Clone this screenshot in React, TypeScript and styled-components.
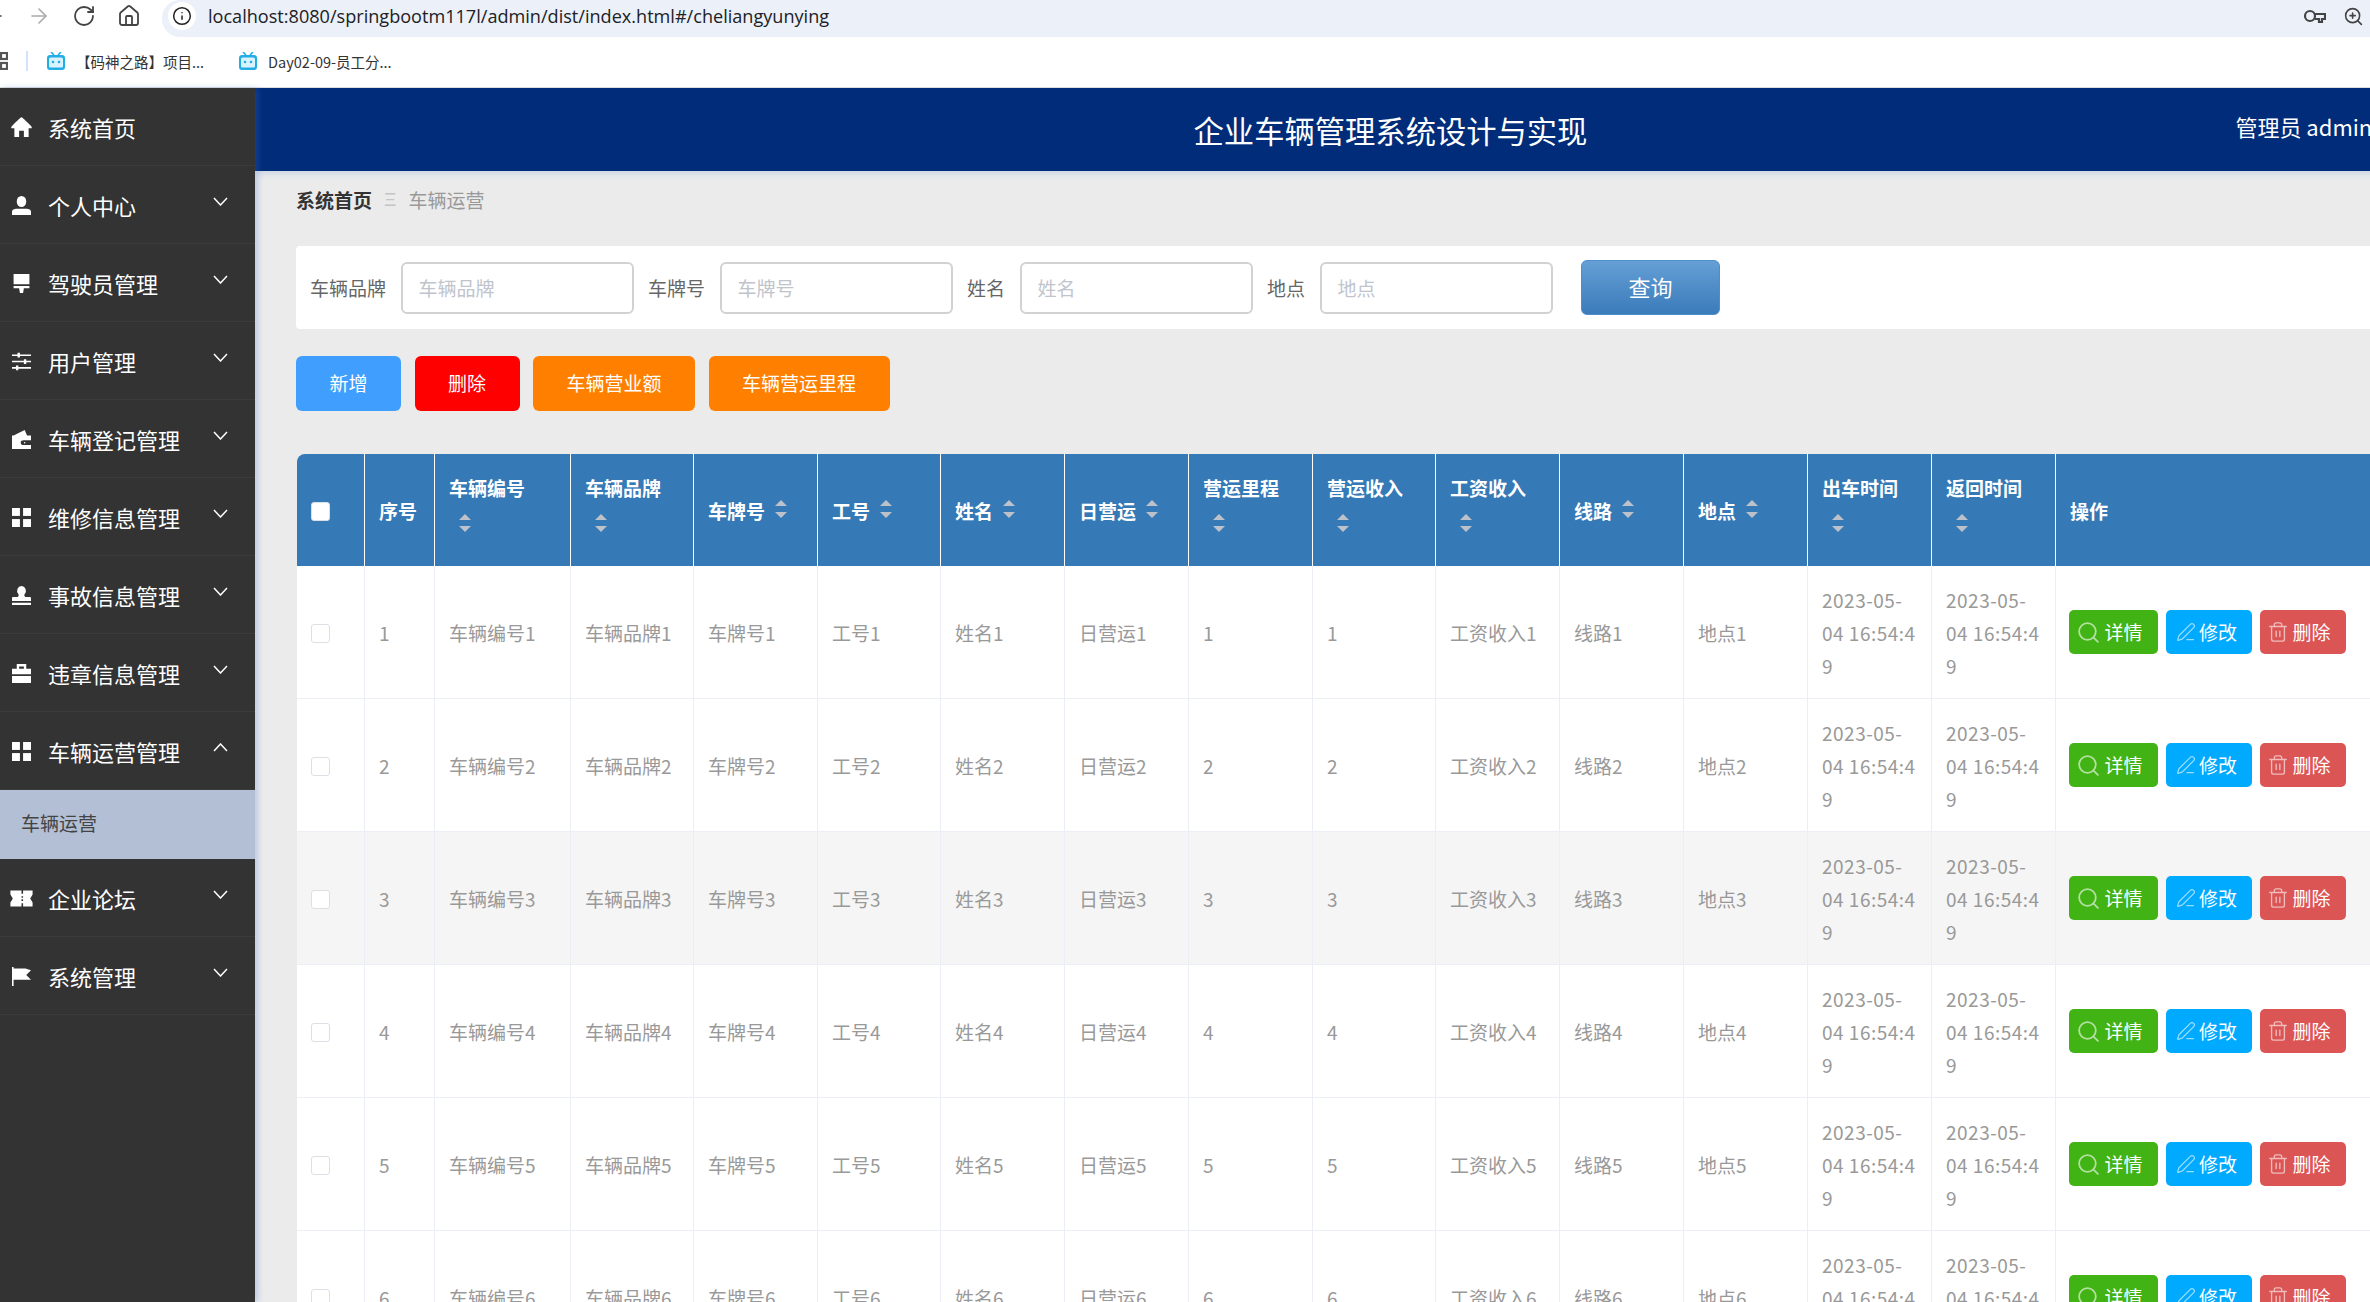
import React from 'react'
import styled, { createGlobalStyle } from 'styled-components'
import { ArrowLeft, ArrowRight, RotateCw, House, Info, ZoomIn, Search, PenLine, Trash2 } from 'lucide-react'

const FONT = `"Noto Sans CJK SC", "Liberation Sans", sans-serif`

const GlobalStyle = createGlobalStyle`
  html, body {
    margin: 0;
    padding: 0;
    overflow: hidden;
    background: #fff;
    font-family: ${FONT};
  }
`

const Page = styled.div`
  width: 2370px;
  height: 1302px;
  overflow: hidden;
  display: flex;
  flex-direction: column;
`

/* browser chrome */
const Toolbar = styled.div`
  height: 37px;
  box-sizing: border-box;
  padding-bottom: 5px;
  display: flex;
  align-items: center;
  gap: 21px;
  margin-left: -18px;
  flex-shrink: 0;
  color: #444;
`

const UrlPill = styled.div`
  flex: 1;
  height: 37px;
  margin-bottom: -5px;
  box-sizing: border-box;
  padding: 0 6px 5px;
  background: #ebf0f9;
  border-radius: 18px 0 0 18px;
  display: flex;
  align-items: center;
`

const InfoDot = styled.div`
  width: 28px;
  height: 28px;
  border-radius: 50%;
  background: #fff;
  display: flex;
  align-items: center;
  justify-content: center;
  color: #222;
`

const UrlText = styled.span`
  margin-left: 12px;
  flex: 1;
  font-family: "Open Sans", "Liberation Sans", sans-serif;
  font-size: 18.1px;
  color: #202124;
`

const PillIcons = styled.div`
  display: flex;
  align-items: center;
  gap: 17px;
  color: #444;
`

const Bookmarks = styled.div`
  height: 51px;
  box-sizing: border-box;
  padding-bottom: 2px;
  display: flex;
  align-items: center;
  flex-shrink: 0;
  border-bottom: 1px solid #dcdcdc;
  color: #333;
  font-size: 14.5px;
`

const AppsIcon = styled.svg`
  margin-left: -10px;
  width: 18px;
  height: 18px;
  color: #555;
`

const BarDivider = styled.div`
  width: 2px;
  height: 20px;
  margin-left: 18px;
  background: #d3e3fd;
`

const Bookmark = styled.div<{ $ml: number }>`
  display: flex;
  align-items: center;
  gap: 10px;
  margin-left: ${p => p.$ml}px;
`

/* sidebar */
const Body = styled.div`
  flex: 1;
  min-height: 0;
  display: flex;
`

const Sidebar = styled.aside`
  width: 255px;
  flex-shrink: 0;
  background: #333;
  position: relative;
  z-index: 2;
  box-shadow: 3px 0 6px rgba(70, 120, 210, 0.28);
`

const MenuItem = styled.div`
  height: 78px;
  box-sizing: border-box;
  border-bottom: 1px solid #3b3b3b;
  display: flex;
  align-items: center;
  padding: 0 27px 0 12px;
  color: #fff;
`

const MenuIcon = styled.svg`
  width: 19px;
  height: 19px;
  margin-top: 2px;
  flex-shrink: 0;
  fill: currentColor;
  overflow: visible;
`

const MenuLabel = styled.span`
  margin-left: 17px;
  font-size: 22px;
  line-height: 30px;
  margin-top: 1px;
  flex: 1;
`

const Chevron = styled.svg`
  width: 15px;
  height: 9px;
  margin-top: -6px;
  fill: none;
  stroke: #fff;
  stroke-width: 1.5;
`

const SubItem = styled.div`
  height: 69px;
  box-sizing: border-box;
  padding: 0 0 5px 21px;
  background: #b3bfd4;
  color: #444;
  font-size: 19px;
  display: flex;
  align-items: center;
`

/* header and content */
const Main = styled.main`
  flex: 1;
  min-width: 0;
  overflow: hidden;
  background: #ebebeb;
`

const Header = styled.header`
  width: 2271px;
  height: 83px;
  background: #002c7a;
  color: #fff;
  display: grid;
  grid-template-columns: 1fr auto 1fr;
  align-items: center;
  box-shadow: 0 3px 6px rgba(70, 120, 210, 0.18);
  position: relative;
`

const Title = styled.h1`
  grid-column: 2;
  margin: 0;
  font-size: 30.3px;
  font-weight: 400;
`

const AdminName = styled.div`
  padding: 0 0 7px 648px;
  font-size: 22px;
  white-space: nowrap;
`

const Content = styled.div`
  padding-left: 41px;
`

const Breadcrumb = styled.div`
  height: 33px;
  padding: 12px 0 30px;
  display: flex;
  align-items: center;
  font-size: 19px;
  color: #999;
`

const CrumbHome = styled.span`
  color: #333;
  font-weight: 700;
`

const CrumbSep = styled.span`
  margin: 0 12px;
  color: #c4c4c4;
  font-family: "Liberation Sans", sans-serif;
  font-size: 19px;
`

const SearchPanel = styled.div`
  height: 83px;
  background: #fff;
  border-radius: 4px 0 0 4px;
  display: flex;
  align-items: center;
  padding-left: 14px;
  gap: 14.5px;
  color: #666;
  font-size: 19px;
`

const SearchInput = styled.input`
  width: 233px;
  height: 52px;
  box-sizing: border-box;
  padding: 0 16px;
  border: 2px solid #d2d2d2;
  border-radius: 6px;
  outline: none;
  font-family: ${FONT};
  font-size: 19px;
  color: #666;
  background: #fff;
  &::placeholder {
    color: #c0c4cc;
  }
`

const QueryButton = styled.button`
  width: 139px;
  height: 55px;
  margin-left: 14px;
  padding-bottom: 4px;
  border: 1px solid #4f8fc9;
  border-radius: 6px;
  background: linear-gradient(180deg, #659fd5 0%, #3a7bba 100%);
  color: #fff;
  font-family: ${FONT};
  font-size: 22px;
`

const ActionRow = styled.div`
  display: flex;
  gap: 13.5px;
  margin: 27px 0 43px;
`

const ActionButton = styled.button<{ $bg: string }>`
  height: 55px;
  padding: 0 33.5px 3px;
  border: 0;
  border-radius: 6px;
  background: ${p => p.$bg};
  color: #fff;
  font-family: ${FONT};
  font-size: 19px;
`

/* table */
const Table = styled.table`
  margin-left: 1px;
  border-collapse: separate;
  border-spacing: 0;
  table-layout: fixed;
  width: 2142px;
  font-size: 19px;
`

const HeadRow = styled.tr`
  background: #3579b6;
  color: #fff;
`

const Th = styled.th`
  height: 112px;
  box-sizing: border-box;
  padding: 0 0 0 14px;
  border-right: 1px solid #fff;
  text-align: left;
  font-weight: 700;
  vertical-align: middle;
  &:first-child {
    border-top-left-radius: 8px;
  }
`

const HeadInner = styled.div<{ $stack?: boolean }>`
  display: flex;
  flex-direction: ${p => (p.$stack ? 'column' : 'row')};
  align-items: ${p => (p.$stack ? 'flex-start' : 'center')};
  line-height: 33px;
`

const Caret = styled.span<{ $stack?: boolean }>`
  display: flex;
  flex-direction: column;
  justify-content: center;
  gap: 6px;
  height: 34px;
  margin: ${p => (p.$stack ? '2px 0 9px 10px' : '-3px 0 0 10px')};
`

const CaretUp = styled.i`
  width: 0;
  height: 0;
  border-left: 6px solid transparent;
  border-right: 6px solid transparent;
  border-bottom: 6.5px solid #bcc1ca;
`

const CaretDown = styled(CaretUp)`
  border-bottom: 0;
  border-top: 6.5px solid #bcc1ca;
`

const Row = styled.tr<{ $hover?: boolean }>`
  background: ${p => (p.$hover ? '#f5f5f5' : '#fff')};
  color: #999;
`

const Td = styled.td`
  height: 133px;
  box-sizing: border-box;
  padding: 0 0 0 14px;
  border-right: 1px solid #ebeef5;
  border-bottom: 1.5px solid #ebeef5;
  line-height: 33px;
  vertical-align: middle;
  overflow: hidden;
`

const Check = styled.span`
  display: block;
  width: 19px;
  height: 19px;
  margin-top: 3px;
  box-sizing: border-box;
  border: 1px solid #dcdfe6;
  border-radius: 3px;
  background: #fff;
`

const DateLine = styled.div`
  white-space: nowrap;
  letter-spacing: 0.5px;
`

const RowActions = styled.div`
  display: flex;
  gap: 8px;
  margin-left: -1px;
`

const RowButton = styled.button<{ $bg: string; $pl: number }>`
  height: 44px;
  display: flex;
  align-items: center;
  gap: 3.5px;
  padding: 0 15px 2px ${p => p.$pl}px;
  border: 0;
  border-radius: 5px;
  background: ${p => p.$bg};
  color: #fff;
  font-family: ${FONT};
  font-size: 19px;
  svg {
    opacity: 0.6;
    flex-shrink: 0;
    margin-top: 2px;
  }
`

const grid = (
  <>
    <rect x="0" y="0" width="10" height="10" />
    <rect x="14" y="0" width="10" height="10" />
    <rect x="0" y="14" width="10" height="10" />
    <rect x="14" y="14" width="10" height="10" />
  </>
)

const menu: { label: string; icon: React.ReactNode; open?: boolean }[] = [
  { label: '系统首页', icon: <path d="M12 -1C10 0 8 2 0 10c-1 1-1 2-1 3h4v11h6v-8h6v8h6V13h4c0-1 0-2-1-3C16 2 14 0 12 -1z" /> },
  {
    label: '个人中心',
    icon: (
      <>
        <ellipse cx="12" cy="7" rx="6" ry="7" />
        <path d="M0 24v-4c0-3 3-4 6-4h12c3 0 6 1 6 4v4z" />
      </>
    ),
  },
  { label: '驾驶员管理', icon: <path d="M2 0h20v13H2zM2 15h20v3h-7l-1 6h-4l-1-6H2z" /> },
  {
    label: '用户管理',
    icon: <path d="M0 3h7V1h3v2h14v2H10v2H7V5H0zM0 11h15V9h3v2h6v2h-6v2h-3v-2H0zM0 19h5v-2h3v2h16v2H8v2H5v-2H0z" />,
  },
  {
    label: '车辆登记管理',
    icon: (
      <path
        fillRule="evenodd"
        d="M2 7l14-7 3 7h3v0h2v17H0V7zM15 13a4 3 0 1 0 0 6h9v-6zM16 15a1 1 0 1 1 0 2 1 1 0 0 1 0-2z"
      />
    ),
  },
  { label: '维修信息管理', icon: grid },
  {
    label: '事故信息管理',
    icon: <path d="M12 0a6 6 0 0 1 4 10c-1 2 0 3 1 4h6c1 0 1 1 1 2v3H0v-3c0-1 0-2 1-2h6c1-1 2-2 1-4a6 6 0 0 1 4-10zM0 21h24v3H0z" />,
  },
  {
    label: '违章信息管理',
    icon: (
      <path
        fillRule="evenodd"
        d="M6 6V0h12v6h6v7H0V6zM9 3v3h6V3zM0 15h24v9H0z"
      />
    ),
  },
  { label: '车辆运营管理', icon: grid, open: true },
  {
    label: '企业论坛',
    icon: <path d="M-2 2h14v4h2V2h12v5l-3 5 3 5v5H14v-4h-2v4H-2v-5l3-5-3-5zM12 9v2h2V9zM12 13v2h2v-2z" />,
  },
  {
    label: '系统管理',
    icon: <path d="M0 0h2v2h15l7 2-6 6 6 6H2v8H0z" />,
  },
]

const columns: { title: string; width: number; sort?: boolean; stack?: boolean; cell?: string }[] = [
  { title: '序号', width: 70 },
  { title: '车辆编号', width: 136, sort: true, stack: true, cell: '车辆编号' },
  { title: '车辆品牌', width: 123, sort: true, stack: true, cell: '车辆品牌' },
  { title: '车牌号', width: 124, sort: true, cell: '车牌号' },
  { title: '工号', width: 123, sort: true, cell: '工号' },
  { title: '姓名', width: 124, sort: true, cell: '姓名' },
  { title: '日营运', width: 124, sort: true, cell: '日营运' },
  { title: '营运里程', width: 124, sort: true, stack: true, cell: '' },
  { title: '营运收入', width: 123, sort: true, stack: true, cell: '' },
  { title: '工资收入', width: 124, sort: true, stack: true, cell: '工资收入' },
  { title: '线路', width: 124, sort: true, cell: '线路' },
  { title: '地点', width: 124, sort: true, cell: '地点' },
  { title: '出车时间', width: 124, sort: true, stack: true },
  { title: '返回时间', width: 124, sort: true, stack: true },
]

const rows = [1, 2, 3, 4, 5, 6]

const DateCell = () => (
  <Td>
    <DateLine>2023-05-</DateLine>
    <DateLine>04 16:54:4</DateLine>
    <DateLine>9</DateLine>
  </Td>
)

export default function App() {
  return (
    <Page>
      <GlobalStyle />
      <Toolbar>
        <ArrowLeft size={24} strokeWidth={1.6} />
        <ArrowRight size={24} strokeWidth={1.6} color="#aaa" />
        <RotateCw size={24} strokeWidth={1.8} />
        <House size={24} strokeWidth={1.8} />
        <UrlPill>
          <InfoDot>
            <Info size={20} strokeWidth={1.8} />
          </InfoDot>
          <UrlText>localhost:8080/springbootm117l/admin/dist/index.html#/cheliangyunying</UrlText>
          <PillIcons>
            <svg width="23" height="16" viewBox="0 0 23 16" fill="none" stroke="currentColor" strokeWidth="2.2">
              <circle cx="7" cy="8" r="5" />
              <path d="M12 6h10v5h-3v3h-3v-3h-4" />
            </svg>
            <ZoomIn size={21} strokeWidth={1.8} />
          </PillIcons>
        </UrlPill>
      </Toolbar>
      <Bookmarks>
        <AppsIcon viewBox="0 0 18 18" fill="none" stroke="currentColor" strokeWidth="2.2">
          <rect x="1" y="1" width="6" height="6" />
          <rect x="11" y="1" width="6" height="6" />
          <rect x="1" y="11" width="6" height="6" />
          <rect x="11" y="11" width="6" height="6" />
        </AppsIcon>
        <BarDivider />
        <Bookmark $ml={18}>
          <TvIcon />
          【码神之路】项目...
        </Bookmark>
        <Bookmark $ml={34}>
          <TvIcon />
          Day02-09-员工分...
        </Bookmark>
      </Bookmarks>
      <Body>
        <Sidebar>
          {menu.map(item => (
            <React.Fragment key={item.label}>
              <MenuItem>
                <MenuIcon viewBox="0 0 24 24">{item.icon}</MenuIcon>
                <MenuLabel>{item.label}</MenuLabel>
                {item.label !== '系统首页' && (
                  <Chevron viewBox="0 0 15 9">
                    <path d={item.open ? 'M1 8l6.5-7L14 8' : 'M1 1l6.5 7L14 1'} />
                  </Chevron>
                )}
              </MenuItem>
              {item.open && <SubItem>车辆运营</SubItem>}
            </React.Fragment>
          ))}
        </Sidebar>
        <Main>
          <Header>
            <Title>企业车辆管理系统设计与实现</Title>
            <AdminName>管理员 admin</AdminName>
          </Header>
          <Content>
            <Breadcrumb>
              <CrumbHome>系统首页</CrumbHome>
              <CrumbSep>Ξ</CrumbSep>
              车辆运营
            </Breadcrumb>
            <SearchPanel>
              <span>车辆品牌</span>
              <SearchInput placeholder="车辆品牌" />
              <span>车牌号</span>
              <SearchInput placeholder="车牌号" />
              <span>姓名</span>
              <SearchInput placeholder="姓名" />
              <span>地点</span>
              <SearchInput placeholder="地点" />
              <QueryButton>查询</QueryButton>
            </SearchPanel>
            <ActionRow>
              <ActionButton $bg="#409eff">新增</ActionButton>
              <ActionButton $bg="#ff0000">删除</ActionButton>
              <ActionButton $bg="#ff8000">车辆营业额</ActionButton>
              <ActionButton $bg="#ff8000">车辆营运里程</ActionButton>
            </ActionRow>
            <Table>
              <colgroup>
                <col width={68} />
                {columns.map(c => (
                  <col key={c.title} width={c.width} />
                ))}
                <col width={383} />
              </colgroup>
              <thead>
                <HeadRow>
                  <Th>
                    <Check />
                  </Th>
                  {columns.map(c => (
                    <Th key={c.title}>
                      <HeadInner $stack={c.stack}>
                        <span>{c.title}</span>
                        {c.sort && (
                          <Caret $stack={c.stack}>
                            <CaretUp />
                            <CaretDown />
                          </Caret>
                        )}
                      </HeadInner>
                    </Th>
                  ))}
                  <Th>操作</Th>
                </HeadRow>
              </thead>
              <tbody>
                {rows.map(n => (
                  <Row key={n} $hover={n === 3}>
                    <Td>
                      <Check />
                    </Td>
                    <Td>{n}</Td>
                    {columns.slice(1, 12).map(c => (
                      <Td key={c.title}>
                        {c.cell}
                        {n}
                      </Td>
                    ))}
                    <DateCell />
                    <DateCell />
                    <Td>
                      <RowActions>
                        <RowButton $bg="#41b314" $pl={7}>
                          <Search size={25} strokeWidth={1.7} />
                          详情
                        </RowButton>
                        <RowButton $bg="#00aaff" $pl={10}>
                          <PenLine size={20} strokeWidth={1.5} />
                          修改
                        </RowButton>
                        <RowButton $bg="#db5555" $pl={7}>
                          <Trash2 size={22} strokeWidth={1.5} />
                          删除
                        </RowButton>
                      </RowActions>
                    </Td>
                  </Row>
                ))}
              </tbody>
            </Table>
          </Content>
        </Main>
      </Body>
    </Page>
  )
}

function TvIcon() {
  return (
    <svg width="20" height="18" viewBox="0 0 20 18" fill="none">
      <path d="M5 0l3 3M15 0l-3 3" stroke="#23ade5" strokeWidth="1.6" />
      <rect x="1" y="3" width="18" height="15" rx="3" fill="#23ade5" />
      <rect x="3" y="5.5" width="14" height="10" rx="1.5" fill="#d9f3fc" />
      <circle cx="7" cy="10" r="1.3" fill="#23ade5" />
      <circle cx="13" cy="10" r="1.3" fill="#23ade5" />
    </svg>
  )
}
